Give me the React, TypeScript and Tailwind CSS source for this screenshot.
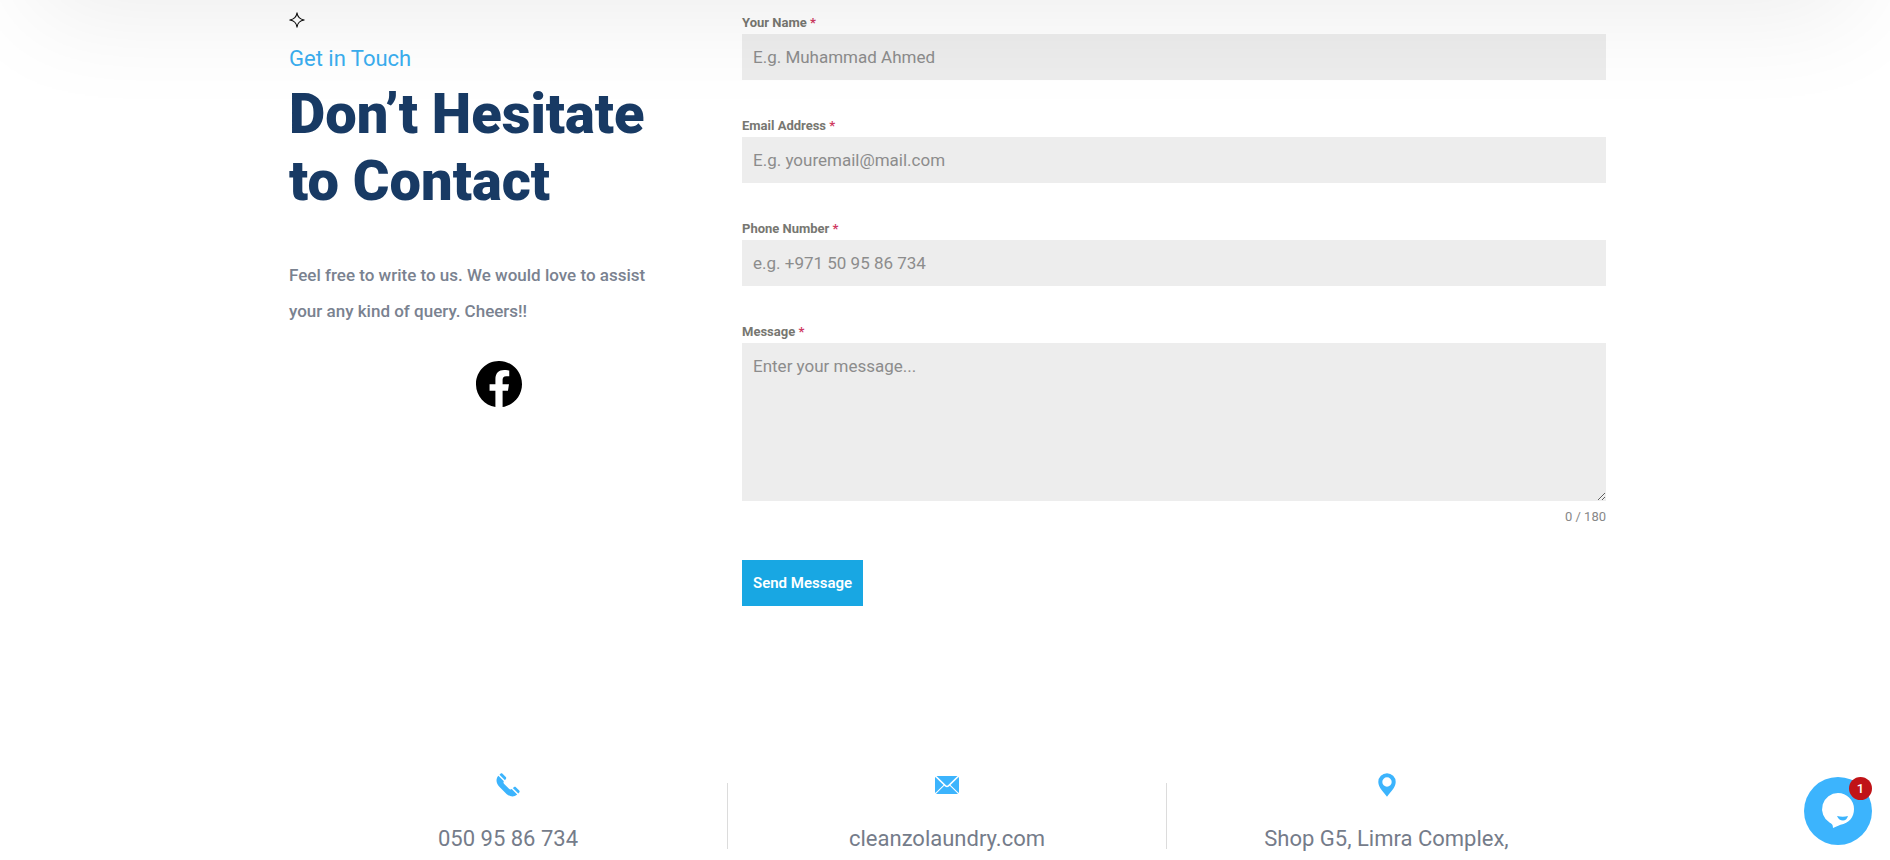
import { useState } from 'react'
import type { ReactNode } from 'react'
import { BsFacebook } from 'react-icons/bs'

const MAX_MESSAGE = 180

function SparkIcon() {
  return (
    <svg viewBox="0 0 16 16" className="h-4 w-4" fill="none" stroke="#111" strokeWidth="1.1" strokeLinejoin="round">
      <path d="M8 0.800C8.500 5 11 7.400 15.200 8C11 8.600 8.500 11 8 15.200C7.500 11 5 8.600 0.800 8C5 7.400 7.500 5 8 0.800Z" />
    </svg>
  )
}

function PhoneIcon() {
  return (
    <svg viewBox="0 0 24 24" className="h-6 w-6" fill="currentColor">
      <path d="M2.400 2.800L7.900 8.300C7.200 9.300 7.400 10.200 8.200 11L13 15.800C13.800 16.600 14.700 16.800 15.700 16.100L21.200 21.600C18 24.500 14 24 10.500 21L3.100 13.600C0 10 -0.400 6 2.400 2.800Z" />
      <path d="M3.500 1.700L4.500 0.800C5.200 0.200 5.900 0.200 6.500 0.800L9.800 4.100C10.400 4.700 10.400 5.400 9.800 6.100L9 7.200Z" />
      <path d="M16.800 15L17.900 14.200C18.600 13.600 19.300 13.600 19.900 14.200L23.200 17.500C23.800 18.100 23.800 18.800 23.200 19.500L22.300 20.500Z" />
    </svg>
  )
}

function MailIcon() {
  return (
    <svg viewBox="0 0 24 24" className="h-6 w-6" fill="currentColor">
      <path d="M1.500 3H22.500L13.200 12.100C12.500 12.800 11.500 12.800 10.800 12.100Z" />
      <path d="M0.300 4L8.500 12L0.300 20C0.100 19.600 0 19.200 0 18.800V5.200C0 4.800 0.100 4.400 0.300 4Z" />
      <path d="M23.700 4L15.500 12L23.700 20C23.900 19.600 24 19.200 24 18.800V5.200C24 4.800 23.900 4.400 23.700 4Z" />
      <path d="M9.200 12.700L10.100 13.500C11.300 14.600 12.700 14.600 13.900 13.500L14.800 12.700L22.900 20.700C22.500 20.900 22.100 21 21.700 21H2.300C1.900 21 1.500 20.900 1.100 20.700Z" />
    </svg>
  )
}

function PinIcon() {
  return (
    <svg viewBox="0 0 24 24" className="h-6 w-6" fill="currentColor" fillRule="evenodd">
      <path d="M12 0.300A8.700 8.700 0 0 0 3.300 9C3.300 14.500 8.700 19.200 12 23.700C15.300 19.200 20.700 14.500 20.700 9A8.700 8.700 0 0 0 12 0.300ZM12 4.300A4.700 4.700 0 1 1 12 13.700A4.700 4.700 0 0 1 12 4.300Z" />
    </svg>
  )
}

function FieldLabel({ htmlFor, children }: { htmlFor: string; children: ReactNode }) {
  return (
    <label htmlFor={htmlFor} className="block text-[13px] leading-[23px] font-bold text-[#777771]">
      {children} <span className="text-[#cf3a61]">*</span>
    </label>
  )
}

const fields = [
  { id: 'name', label: 'Your Name', type: 'text', placeholder: 'E.g. Muhammad Ahmed' },
  { id: 'email', label: 'Email Address', type: 'email', placeholder: 'E.g. youremail@mail.com' },
  { id: 'phone', label: 'Phone Number', type: 'tel', placeholder: 'e.g. +971 50 95 86 734' },
]

const contacts = [
  { icon: <PhoneIcon />, text: '050 95 86 734', href: 'tel:0509586734' },
  { icon: <MailIcon />, text: 'cleanzolaundry.com', href: '#mail' },
  { icon: <PinIcon />, text: 'Shop G5, Limra Complex,', href: '#map' },
]

export default function App() {
  const [message, setMessage] = useState('')

  return (
    <div className="relative overflow-hidden bg-white font-['Roboto',sans-serif]">
      {/* Shadow cast by the section above */}
      <div className="pointer-events-none absolute inset-x-0 bottom-full z-10 h-96 shadow-[0_50px_100px_-35px_rgba(0,0,0,0.075)]" />

      <main className="mx-auto max-w-[1322px] pt-[11px] pl-[5px]">
        <section className="grid grid-cols-[419fr_864fr] gap-[34px]">
          <div className="pt-px">
            <SparkIcon />
            <p className="mt-[18px] text-[22px] leading-[26px] text-[#3aaeef]">Get in Touch</p>
            <h1 className="mt-[9px] text-[56px] leading-[67px] font-black text-[#183a64]">
              Don’t Hesitate
              <br />
              to Contact
            </h1>
            <p className="mt-[42px] text-[17px] leading-9 font-medium text-[#7a8290]">
              Feel free to write to us. We would love to assist
              <br />
              your any kind of query. Cheers!!
            </p>
            <a href="#facebook" aria-label="Facebook" className="mx-auto mt-8 block w-[46px] text-black">
              <BsFacebook className="h-[46px] w-[46px]" />
            </a>
          </div>

          <form onSubmit={(e) => e.preventDefault()}>
            {fields.map((field) => (
              <div key={field.id} className="mb-[34px]">
                <FieldLabel htmlFor={field.id}>{field.label}</FieldLabel>
                <input
                  id={field.id}
                  type={field.type}
                  placeholder={field.placeholder}
                  className="block h-[46px] w-full bg-[#ededed] px-[11px] text-[17px] text-[#777771] outline-none placeholder:text-[#8c8c8c]"
                />
              </div>
            ))}
            <FieldLabel htmlFor="message">Message</FieldLabel>
            <textarea
              id="message"
              maxLength={MAX_MESSAGE}
              value={message}
              onChange={(e) => setMessage(e.target.value)}
              placeholder="Enter your message..."
              className="block h-[158px] w-full resize-y bg-[#ededed] px-[11px] py-[10px] text-[17px] leading-[26px] text-[#777771] outline-none placeholder:text-[#8c8c8c]"
            />
            <p className="mt-1 text-right text-[13px] leading-[23px] text-[#888888]">
              {message.length} / {MAX_MESSAGE}
            </p>
            <button type="submit" className="mt-8 h-[46px] bg-[#18a7e3] px-[11px] text-[15px] font-semibold text-white">
              Send Message
            </button>
          </form>
        </section>

        <section className="mt-[165px] grid grid-cols-3">
          {contacts.map((item, i) => (
            <div key={item.text} className="flex items-start">
              <div className="flex-1 text-center text-[#3cb4fd]">
                <div className="mt-0.5 flex justify-center">{item.icon}</div>
                <a href={item.href} className="mt-[25px] block text-[22px] leading-[34px] text-[#757c8a]">
                  {item.text}
                </a>
              </div>
              {i < contacts.length - 1 && <div className="mt-3 h-[66px] w-px bg-[#dcdcdc]" />}
            </div>
          ))}
        </section>
      </main>

      <button
        type="button"
        aria-label="Open chat"
        className="fixed right-[18px] bottom-[15px] z-20 h-[68px] w-[68px] rounded-full bg-[#3cb4fd]"
      >
        <svg viewBox="0 0 68 68" className="h-full w-full">
          <path d="M34 16A16 16 0 0 0 25.500 45.500C28 46.800 28.800 47.500 29 51L36.500 47.700C45 46.500 50 40 50 32A16 16 0 0 0 34 16Z" fill="#fff" />
          <path d="M33 39Q39 40.500 44 39Q42.500 43.500 39 43.500Q35 43.500 33 39Z" fill="#3cb4fd" />
        </svg>
        <span className="absolute top-0 right-0 flex h-[23px] w-[23px] items-center justify-center rounded-full bg-[#c01317] text-[13px] font-medium text-white">
          1
        </span>
      </button>
    </div>
  )
}
